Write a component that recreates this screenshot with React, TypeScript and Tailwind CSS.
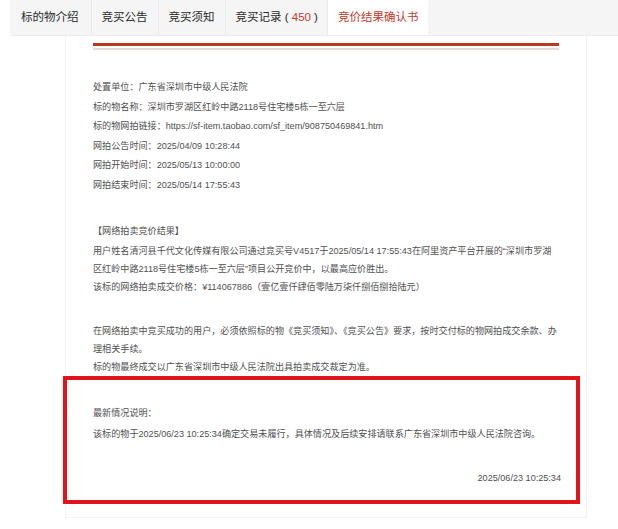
import React from "react";

const FONT = { fontFamily: '"Liberation Sans", "Noto Sans CJK SC", sans-serif' };

function Tab({ children, active, cls }: { children: React.ReactNode; active?: boolean; cls?: string }) {
  return (
    <div
      className={
        "h-full flex items-center text-[11.5px] " +
        (active ? "bg-white text-[#c0392b] px-[10px]" : "text-[#2a2a2a] border-r border-[#e9e9e9] ") +
        (cls ?? "")
      }
    >
      {children}
    </div>
  );
}

export default function App() {
  return (
    <div className="w-[618px] h-[529px] bg-white overflow-hidden" style={FONT}>
      <div className="ml-[10px] flex h-[36px] bg-[#f5f5f5] border-b border-[#ededed]">
        <Tab cls="pl-[11px] pr-[12px]">标的物介绍</Tab>
        <Tab cls="px-[10px]">竞买公告</Tab>
        <Tab cls="px-[10px]">竞买须知</Tab>
        <Tab cls="pl-[10px] pr-[9px]">
          竞买记录<span className="whitespace-pre">{" ( "}</span>
          <span className="text-[#c0392b]">450</span>
          <span className="whitespace-pre">{" )"}</span>
        </Tab>
        <Tab active>竞价结果确认书</Tab>
      </div>
      <div className="ml-[65px] w-[522px] border-x border-b border-[#f2f2f2] pl-[27px] pr-[27px] pt-[7px] pb-[13px] text-[9.1px] text-[#505050]">
        <div className="h-[3px] bg-[#b8391e]" />
        <div className="mt-[2px] h-[2px] bg-[#e2dcd8]" />

        <div className="mt-[28px] leading-[19.6px]">
          <div>处置单位：广东省深圳市中级人民法院</div>
          <div>标的物名称：深圳市罗湖区红岭中路2118号住宅楼5栋一至六层</div>
          <div>标的物网拍链接：https://sf-item.taobao.com/sf_item/908750469841.htm</div>
          <div>网拍公告时间：2025/04/09 10:28:44</div>
          <div>网拍开始时间：2025/05/13 10:00:00</div>
          <div>网拍结束时间：2025/05/14 17:55:43</div>
        </div>

        <div className="mt-[26px] leading-[18px]">
          <div className="mb-[2px]">【网络拍卖竞价结果】</div>
          <div>
            用户姓名清河县千代文化传媒有限公司通过竞买号V4517于2025/05/14 17:55:43在阿里资产平台开展的“深圳市罗湖区红岭中路2118号住宅楼5栋一至六层”项目公开竞价中，以最高应价胜出。
          </div>
          <div>该标的网络拍卖成交价格：¥114067886（壹亿壹仟肆佰零陆万柒仟捌佰捌拾陆元）</div>
        </div>

        <div className="mt-[26px] leading-[18px]">
          <div>
            在网络拍卖中竞买成功的用户，必须依照标的物《竞买须知》、《竞买公告》要求，按时交付标的物网拍成交余款、办理相关手续。
          </div>
          <div>标的物最终成交以广东省深圳市中级人民法院出具拍卖成交裁定为准。</div>
        </div>

        <div className="ml-[-30px] mr-[-21px] border-4 border-[#e0141a] pl-[26px] pr-[15px] pt-[24px] pb-[13px] leading-[18px]">
          <div>最新情况说明：</div>
          <div className="mt-[3px]">
            该标的物于2025/06/23 10:25:34确定交易未履行，具体情况及后续安排请联系广东省深圳市中级人民法院咨询。
          </div>
          <div className="mt-[26px] text-right">2025/06/23 10:25:34</div>
        </div>
      </div>
    </div>
  );
}
